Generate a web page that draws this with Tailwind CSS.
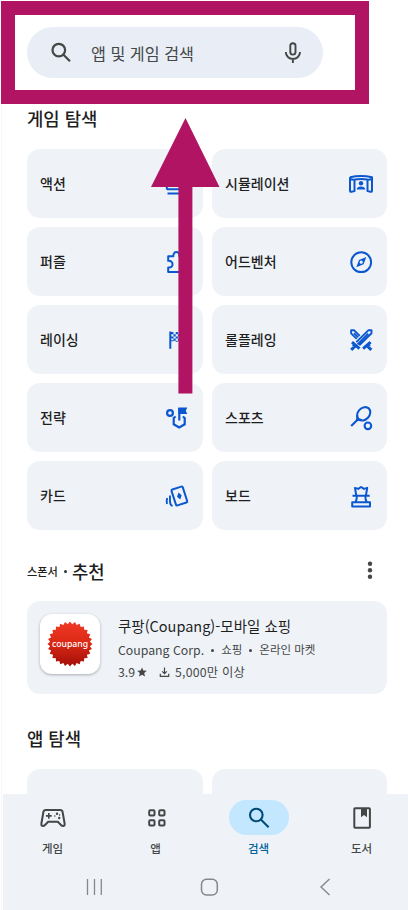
<!DOCTYPE html>
<html lang="ko">
<head>
<meta charset="utf-8">
<meta name="viewport" content="width=device-width, initial-scale=1">
<title>앱 및 게임 검색</title>
<script src="https://cdn.jsdelivr.net/npm/@tailwindcss/browser@4"></script>
</head>
<body class="bg-white">
<div class="relative flex h-[910px] w-[408px] flex-col overflow-hidden bg-white font-['Noto_Sans_CJK_KR',sans-serif] text-[#1f1f1f]">
  <div class="absolute left-px top-0 h-full w-px bg-[#f8f8f8]"></div>

  <header class="px-[27px] pt-[27px]">
    <div class="flex h-[51px] w-[296px] items-center rounded-full bg-[#e8edf6] pl-[22px] pr-[18px] text-[#444746]">
      <svg class="size-6 shrink-0" viewBox="0 0 24 24" fill="none" stroke="currentColor" stroke-width="2.2"><circle cx="9.8" cy="9.1" r="6.3"/><path d="M14 13.300l7 7"/></svg>
      <span class="ml-[18px] flex-1 text-[16.2px] leading-6">앱 및 게임 검색</span>
      <svg class="size-6 shrink-0" viewBox="0 0 24 24" fill="none" stroke="currentColor" stroke-width="1.9"><rect x="9.3" y="2.2" width="5.2" height="11.400" rx="2.6"/><path d="M4.800 11c0 4 3.200 6.900 7.100 6.900S19 15 19 11M11.900 18v4"/></svg>
    </div>
  </header>

  <main class="flex-1 px-[27px]">
    <h2 class="mt-[27px] h-[27px] text-[17.800px] font-medium leading-[26px]">게임 탐색</h2>
    <section class="mt-[17px] grid w-[360px] grid-cols-[176px_175px] gap-[9px] text-[14px] font-medium text-[#1f1f1f]">
      <div class="flex h-[69px] items-center justify-between rounded-[13px] bg-[#eff3f8] px-[13px]"><span>액션</span>
        <svg class="size-[26px] text-[#0b57d0]" viewBox="0 0 26 26" fill="none" stroke="currentColor" stroke-width="2"><path d="M2.800 13v3.700q0 1.600 1.600 1.600h17.200M3.500 22.500h18"/></svg></div>
      <div class="flex h-[69px] items-center justify-between rounded-[13px] bg-[#eff3f8] px-[13px]"><span>시뮬레이션</span>
        <svg class="size-[26px] text-[#0b57d0]" viewBox="0 0 26 26" fill="none" stroke="currentColor" stroke-width="2" stroke-linejoin="round"><path d="M2 6.200Q13 3.800 24 6.200V19.500q0 1.600-1.500 1.300l-3-.7V8.900l4.500-1M2 6.200V19.500q0 1.600 1.500 1.300l3-.7V8.900L2 7.900M6.500 8.600Q13 7.200 19.500 8.600"/><circle cx="13" cy="12.200" r="2.200" fill="currentColor" stroke="none"/><path d="M8.700 18.500Q9 15.500 13 15.500t4.300 3z" fill="currentColor" stroke="none"/></svg></div>
      <div class="flex h-[69px] items-center justify-between rounded-[13px] bg-[#eff3f8] px-[13px]"><span>퍼즐</span>
        <svg class="size-[26px] text-[#0b57d0]" viewBox="0 0 26 26" fill="none" stroke="currentColor" stroke-width="2" stroke-linejoin="round"><path d="M4.200 7.200H9.400C9 1.700 15.800 1.700 15.400 7.200H20.500V12C25.500 12 25.500 18 20.500 18V23H4.200V18.500C10 19.200 10 11.100 4.200 11.800z"/></svg></div>
      <div class="flex h-[69px] items-center justify-between rounded-[13px] bg-[#eff3f8] px-[13px]"><span>어드벤처</span>
        <svg class="size-[26px] text-[#0b57d0]" viewBox="0 0 26 26" fill="none" stroke="currentColor" stroke-width="2"><circle cx="13.200" cy="13.200" r="9.900"/><path fill="currentColor" fill-rule="evenodd" stroke="none" d="M18.300 8.100l-2.700 7.200-7.300 2.900 2.700-7.300zM13.200 11.600a1.600 1.600 0 1 0 0 3.200 1.600 1.600 0 0 0 0-3.200"/></svg></div>
      <div class="flex h-[69px] items-center justify-between rounded-[13px] bg-[#eff3f8] px-[13px]"><span>레이싱</span>
        <svg class="size-[26px] text-[#0b57d0]" viewBox="0 0 26 26" fill="currentColor"><path d="M5.300 4.500h2v17.200h-2zM7.300 5h2.200v2.200H7.300zM11.700 5h2.200v2.200h-2.200zM9.500 7.200h2.200v2.200H9.500zM13.900 7.200h2.200v2.200h-2.200zM7.300 9.400h2.200v2.200H7.300zM11.700 9.400h2.200v2.200h-2.200zM9.500 11.600h2.200v2.200H9.500zM13.900 11.600h2.200v2.200h-2.200zM7.300 13.300h2.200v1H7.300zM11.700 13.800h2.200v1h-2.200z"/></svg></div>
      <div class="flex h-[69px] items-center justify-between rounded-[13px] bg-[#eff3f8] px-[13px]"><span>롤플레잉</span>
        <svg class="size-[26px] text-[#0b57d0]" viewBox="0 0 26 26" fill="none" stroke="currentColor" stroke-width="1.900" stroke-linejoin="round"><path d="M8.300 15.200L20.300 3.300H23.500V6.300L11.300 18.200M9.500 17.300L20.200 6.600M8.700 11.900L3.100 6.300V3.300H6.200L11.800 8.900M6 6.200l4.200 4.200"/><path stroke-width="3" d="M4 15.200l7.500 6.500M7.500 18.700l-4.300 4.200M22.600 15.200l-7.500 6.500M19 18.700l4.300 4.200M5.500 19.500l1-2.500M21.200 19.500l-1-2.500"/></svg></div>
      <div class="flex h-[69px] items-center justify-between rounded-[13px] bg-[#eff3f8] px-[13px]"><span>전략</span>
        <svg class="size-[26px] text-[#0b57d0]" viewBox="0 0 26 26" fill="none" stroke="currentColor" stroke-width="2.200"><circle cx="6" cy="8" r="2.900"/><path d="M11.600 11.500L9.700 13v6.300l5.500 3.200 5.500-3.200V13l-1.900-1.500M15.300 3v12.500"/><path fill="currentColor" stroke="none" d="M14.300 2.600h9l-1.500 3.100 1.500 3.300h-9z"/></svg></div>
      <div class="flex h-[69px] items-center justify-between rounded-[13px] bg-[#eff3f8] px-[13px]"><span>스포츠</span>
        <svg class="size-[26px] text-[#0b57d0]" viewBox="0 0 26 26" fill="none" stroke="currentColor" stroke-width="2.100"><ellipse cx="15.700" cy="8.800" rx="7.400" ry="5.800" transform="rotate(-47 15.700 8.800)"/><path d="M3.200 21L9 15.200M9.100 10.500q.9 2.400-.4 4.900 2.400-1.300 5-.4"/><circle cx="19.900" cy="20.800" r="3.300"/></svg></div>
      <div class="flex h-[69px] items-center justify-between rounded-[13px] bg-[#eff3f8] px-[13px]"><span>카드</span>
        <svg class="size-[26px] text-[#0b57d0]" viewBox="0 0 26 26" fill="none" stroke="currentColor" stroke-width="2"><rect x="9.500" y="4.700" width="11.800" height="16.600" rx="1.200" transform="rotate(-18 15.400 13.100)"/><path fill="currentColor" stroke="none" d="M14.500 9.600l3.200 2.700-1.500 4.200-3.200-2.700z"/><path d="M6 12.500v6.300q0 3.200 2.500 4.300M3.200 15q-.9 2.800-.2 6" stroke-width="1.900"/></svg></div>
      <div class="flex h-[69px] items-center justify-between rounded-[13px] bg-[#eff3f8] px-[13px]"><span>보드</span>
        <svg class="size-[26px] text-[#0b57d0]" viewBox="0 0 26 26" fill="none" stroke="currentColor" stroke-width="2" stroke-linejoin="round"><path d="M8.200 12L7 4.900l3.200 1L13.100 4 16 5.900l3.200-1L18 12M4.500 12.800h17.200M8.900 13c0 3-.6 4.700-1.500 6.300M17.300 13c0 3 .6 4.700 1.500 6.300M4.200 19.300h17.800v4.200H4.200z"/></svg></div>
    </section>

    <div class="mt-[29px] flex h-[24px] w-[360px] items-center">
      <span class="text-[11.200px] font-medium">스폰서</span>
      <span class="ml-[6px] mr-[5px] size-[3px] rounded-full bg-[#333]"></span>
      <h2 class="text-[17.800px] font-medium leading-6">추천</h2>
      <svg class="ml-auto mr-[13px] mt-[-2px] h-[20px] w-[8px]" viewBox="0 0 8 20" fill="#444746"><circle cx="4" cy="3.700" r="2.200"/><circle cx="4" cy="10.200" r="2.200"/><circle cx="4" cy="16.700" r="2.200"/></svg>
    </div>

    <article class="mt-[18px] flex h-[93px] w-[360px] rounded-[13px] bg-[#eff3f8] px-[13px] pt-[13px]">
      <div class="flex size-[60px] shrink-0 items-center justify-center rounded-[12px] bg-white shadow-[0_1px_3px_rgba(0,0,0,0.3)]">
        <svg class="size-[46px]" viewBox="-23 -23 46 46">
          <defs><linearGradient id="red" x1="0" y1="0" x2="0" y2="1"><stop offset="0" stop-color="#f03a24"/><stop offset=".45" stop-color="#dc2a17"/><stop offset="1" stop-color="#a30f08"/></linearGradient></defs>
          <g fill="url(#red)"><polygon id="seal" points=""/></g>
          <text x="0" y="2.600" text-anchor="middle" textLength="36" lengthAdjust="spacingAndGlyphs" font-family="Noto Sans, sans-serif" font-size="9.500" font-weight="500" fill="#fff">coupang</text>
        </svg>
      </div>
      <div class="ml-[18px] flex flex-col whitespace-nowrap text-[#444746]">
        <h3 class="h-[24px] text-[14.500px] leading-[24px] text-[#1f1f1f]">쿠팡(Coupang)-모바일 쇼핑</h3>
        <div class="flex h-[24px] items-center text-[11.500px]"><span class="text-[12.300px]">Coupang Corp.</span><span class="mx-[7px] size-[3px] rounded-full bg-[#444746]"></span><span>쇼핑</span><span class="mx-[7px] size-[3px] rounded-full bg-[#444746]"></span><span>온라인 마켓</span></div>
        <div class="flex h-[20px] items-center text-[12.300px]"><span>3.9</span>
          <svg class="ml-[2px] size-[10px]" viewBox="0 0 24 24" fill="currentColor"><path d="M12 1l3.300 7.500 8.200.7-6.200 5.400 1.900 8L12 18.400l-7.200 4.200 1.900-8L.5 9.200l8.200-.7z"/></svg>
          <svg class="ml-[12px] size-[11px]" viewBox="0 0 11 11" fill="none" stroke="currentColor" stroke-width="1.200"><path d="M5.500 .5v6M3.200 4.300l2.300 2.300 2.300-2.300M1.300 6.800v2.500h8.400V6.800"/></svg>
          <span class="ml-[5px] tracking-[0.200px]">5,000만 이상</span></div>
      </div>
    </article>

    <h2 class="mt-[32px] h-[26px] text-[17.800px] font-medium leading-[25px]">앱 탐색</h2>
    <section class="mt-[17px] grid w-[360px] grid-cols-[176px_175px] gap-[9px]">
      <div class="h-[25px] rounded-t-[13px] bg-[#eff3f8]"></div>
      <div class="h-[25px] rounded-t-[13px] bg-[#eff3f8]"></div>
    </section>
  </main>

  <footer class="ml-[3px] h-[116px] shrink-0 bg-[#eff3f8] text-[11.500px] font-medium text-[#444746]">
    <nav class="ml-[-2px] flex pt-[6px]">
      <a class="flex w-[103px] shrink-0 flex-col items-center"><span class="flex h-[35px] w-[60px] items-center justify-center"><svg class="h-[22px] w-[28px]" viewBox="0 0 28 22" fill="none" stroke="currentColor" stroke-width="2" stroke-linejoin="round"><path d="M6.700 3H21.300Q23.200 3 23.600 5L25.600 16.500Q26 19 24 19 23 19 22 18L18.800 14.800H9.200L6 18Q5 19 4 19 2 19 2.400 16.500L4.400 5Q4.800 3 6.700 3z"/><path d="M9.800 6v5.800M6.900 8.900h5.800" stroke-width="1.600"/><g fill="currentColor" stroke="none"><circle cx="18" cy="6.800" r="1.200"/><circle cx="15.800" cy="9" r=".8"/><circle cx="20.600" cy="8" r=".8"/><circle cx="20.200" cy="11" r="1.200"/></g></svg></span><span class="mt-[4px] leading-[18px]">게임</span></a>
      <a class="flex w-[103px] shrink-0 flex-col items-center"><span class="flex h-[35px] w-[60px] items-center justify-center"><svg class="ml-[2px] size-5" viewBox="0 0 20 20" fill="none" stroke="currentColor" stroke-width="2"><rect x="2.200" y="2.200" width="5.300" height="5.300" rx="1"/><rect x="12.200" y="2.200" width="5.300" height="5.300" rx="1"/><rect x="2.200" y="12.200" width="5.300" height="5.300" rx="1"/><rect x="12.200" y="12.200" width="5.300" height="5.300" rx="1"/></svg></span><span class="mt-[4px] leading-[18px]">앱</span></a>
      <a class="flex w-[103px] shrink-0 flex-col items-center text-[#00639b]"><span class="ml-px flex h-[35px] w-[60px] items-center justify-center rounded-full bg-[#c2e7ff] text-[#004a77]"><svg class="size-6" viewBox="0 0 24 24" fill="none" stroke="currentColor" stroke-width="2.100"><circle cx="9.300" cy="9" r="6.300"/><path d="M13.600 13.300l8 8"/></svg></span><span class="mt-[4px] leading-[18px]">검색</span></a>
      <a class="flex w-[103px] shrink-0 flex-col items-center"><span class="flex h-[35px] w-[60px] items-center justify-center"><svg class="size-6" viewBox="0 0 24 24" fill="none" stroke="currentColor" stroke-width="2"><rect x="4.300" y="2.200" width="15.600" height="19.600" rx=".8"/><path fill="currentColor" stroke="none" d="M11 2h6v9.200l-3-2.300-3 2.300z"/></svg></span><span class="mt-[4px] leading-[18px]">도서</span></a>
    </nav>
    <div class="mt-[19px] flex items-center text-[#858789]">
      <svg class="ml-[81px] h-[22px] w-[20px]" viewBox="0 0 20 22" fill="none" stroke="currentColor" stroke-width="1.300"><path d="M3.500 3v16M10.500 3v16M17.300 3v16"/></svg>
      <svg class="ml-[94px] h-[22px] w-[22px]" viewBox="0 0 22 22" fill="none" stroke="currentColor" stroke-width="1.500"><rect x="3.500" y="3.200" width="15.800" height="15.800" rx="5"/></svg>
      <svg class="ml-[97px] h-[22px] w-[16px]" viewBox="0 0 16 22" fill="none" stroke="currentColor" stroke-width="1.400"><path d="M12.500 3L4 11l8.500 8"/></svg>
    </div>
  </footer>

  <div class="absolute left-[0.500px] top-px h-[103px] w-[368px] border-[14px] border-[#b11462]"></div>
  <svg class="absolute left-[151px] top-[118px] h-[276px] w-[69px]" viewBox="0 0 69 276" fill="#b11462"><path d="M34.500 0L68.500 69H41.400V275.500H27.400V69H0z"/></svg>
</div>
<script>
  // Serrated edge of the round seal: 28 teeth.
  const pts = [];
  for (let i = 0; i < 56; i++) {
    const r = i % 2 ? 20 : 22.500, a = (i * Math.PI) / 28 - Math.PI / 2;
    pts.push((r * Math.cos(a)).toFixed(2) + ',' + (r * Math.sin(a)).toFixed(2));
  }
  document.getElementById('seal').setAttribute('points', pts.join(' '));
</script>
</body>
</html>
